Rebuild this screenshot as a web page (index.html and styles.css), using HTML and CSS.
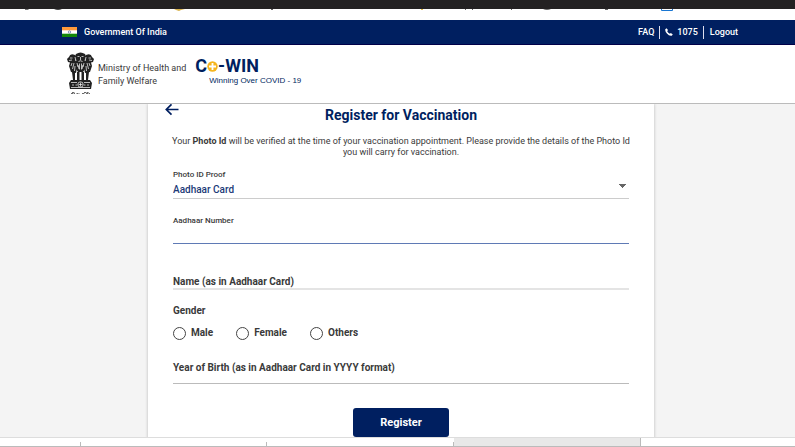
FILE: index.html
```
<!DOCTYPE html>
<html lang="en">
<head>
    <meta charset="UTF-8">
    <meta name="viewport" content="width=device-width, initial-scale=1.0">
    <title>Register for Vaccination</title>
    <link rel="stylesheet" href="styles.css">
</head>
<body>
    <div class="browser-top"></div>
    <div class="browser-strip">
        <svg width="795" height="11" viewBox="0 0 795 11" aria-hidden="true">
            <path d="M25 0h4l-1 1h-3z" fill="#777"/>
            <path d="M54 0h8q-4 2-8 0z" fill="#444"/>
            <path d="M174 0h11l-4 1-2 1-3-1z" fill="#d8b24a"/>
            <path d="M271 0h2v1h-2zM465 0h1v1h-1zM472 0h1v1h-1zM511 0h1v1h-1z" fill="#666"/>
            <path d="M421 0h2v1h-2z" fill="#e3c04a"/>
            <path d="M543 0h8q-4 2-8 0zM605 0h3v1h-3z" fill="#666"/>
            <path d="M661.500 0v1.500h11V0" fill="none" stroke="#1976d2"/>
        </svg>
    </div>
    <div class="gov-bar">
        <div class="gov-name">
            <svg width="15" height="10" viewBox="0 0 15 10" aria-hidden="true">
                <path d="M0 0h15v10H0z" fill="#fff"/>
                <path d="M0 0h15v3.300H0z" fill="#ff9a3c"/>
                <path d="M0 6.700h15V10H0z" fill="#138808"/>
                <circle cx="7.500" cy="5" r="1.200" fill="none" stroke="#5a6aa0" stroke-width=".7"/>
            </svg>
            <span>Government Of India</span>
        </div>
        <nav class="gov-links">
            <a href="#">FAQ</a>
            <a href="tel:1075">
                <svg width="8" height="8" viewBox="0 0 8 8" aria-hidden="true">
                    <path d="M.3 1.200 1.500.2 3 2.100 2.200 3.200Q3.100 4.800 4.800 5.700L5.900 5l1.900 1.500-1.100 1.200Q4.200 8.200 1.900 5.600-.1 3.300.3 1.200z" fill="#fff"/>
                </svg>
                1075
            </a>
            <a href="#">Logout</a>
        </nav>
    </div>
    <header class="header">
        <svg class="emblem" width="27" height="43" viewBox="0 0 27 43" aria-hidden="true">
            <g fill="#222">
                <path d="M9 2Q13.500-1 18 2l1.500 3-1 3 1.500 4-2 5-2 3h-5l-2-3-2-5 1.500-4-1-3z"/>
                <path d="M8 3Q3 1 2 5L0 7l1 3 2 .5L2 14l2 6 5 1 1-5-2-5z"/>
                <path d="M19 3q5-2 6 2l2 2-1 3-2 .5 1 3.500-2 6-5 1-1-5 2-5z"/>
                <path d="M5 20h3v8H6zM10 20h2.500v8H10zM14.500 20H17v8h-2.500zM19 20h3l-1 8h-2z"/>
                <path d="M4 28h19l2 3-1 6H3l-1-6z"/>
            </g>
            <g fill="none" stroke="#fff" stroke-width=".7">
                <path d="M10.500 4.500h2M14.500 4.500h2M13.500 5v3M11.500 9.500q2-1.500 4 0M10 11l1 4M17 11l-1 4M12.500 11.500v6M14.500 11.500v6M11 13l1 4M16 13l-1 4"/>
                <path d="M3 6h2.500M2 8.500l3-.5M5 11l-1 3M7 11l-1.500 6M8 14l-.5 5M24 6h-2.500M25 8.500 22 8M22 11l1 3M20 11l1.500 6M19 14l.5 5M8 5l1 4M19 5l-1 4"/>
                <path d="M4 30.500h6M17 30.500h6M4 35.500h19M5 33h2M8.500 33h1.500M17 33h1.500M20 33h2"/>
                <circle cx="13.500" cy="32.500" r="2.700" fill="#222"/>
                <path d="M13.500 30.500v4M11.500 32.500h4"/>
            </g>
            <path d="M4 41.500h4M9.500 41.500h3M15 41.500h3M19 41.500h4M5 40.500h3M17 40.500h5" stroke="#444" stroke-width=".8" stroke-dasharray="2 .6" fill="none"/>
        </svg>
        <p class="ministry">Ministry of Health and<br>Family Welfare</p>
        <a class="cowin" href="#">
            <span class="cowin-name">
                C<svg width="11" height="11" viewBox="0 0 11 11" aria-hidden="true">
                    <circle cx="5.500" cy="5.500" r="5.200" fill="#f6b51e"/>
                    <path d="M5.500 2v7M2 5.500h7" stroke="#fff" stroke-width="1.800"/>
                </svg>-WIN
            </span>
            <span class="cowin-tagline">Winning Over COVID - 19</span>
        </a>
    </header>
    <main class="page">
        <form class="card">
            <div class="card-title">
                <button class="back" type="button" aria-label="Back">
                    <svg width="14" height="12" viewBox="0 0 14 12" aria-hidden="true">
                        <path d="M6.500.3 1.300 5.500l5.200 5.200M1.300 5.500H13.500" fill="none" stroke="#001f60" stroke-width="1.700"/>
                    </svg>
                </button>
                <h1>Register for Vaccination</h1>
            </div>
            <p class="note">Your <b>Photo Id</b> will be verified at the time of your vaccination appointment. Please provide the details of the Photo Id you will carry for vaccination.</p>

            <div class="field">
                <label for="proof">Photo ID Proof</label>
                <select id="proof">
                    <option>Aadhaar Card</option>
                </select>
            </div>
            <div class="field active">
                <label for="number">Aadhaar Number</label>
                <input type="text" id="number">
            </div>
            <div class="field-inline name">
                <label for="name">Name (as in Aadhaar Card)</label>
                <input type="text" id="name">
            </div>
            <fieldset class="gender">
                <legend>Gender</legend>
                <div class="options">
                    <label><input type="radio" name="gender">Male</label>
                    <label><input type="radio" name="gender">Female</label>
                    <label><input type="radio" name="gender">Others</label>
                </div>
            </fieldset>
            <div class="field-inline birth">
                <label for="birth">Year of Birth (as in Aadhaar Card in YYYY format)</label>
                <input type="text" id="birth">
            </div>
            <button class="register" type="submit">Register</button>
        </form>
    </main>
    <div class="browser-bottom">
        <span></span>
        <span></span>
        <span></span>
        <span class="current"></span>
    </div>
</body>
</html>
```
FILE: styles.css
```
* {
    box-sizing: border-box;
}
body {
    margin: 0;
    height: 100vh;
    display: flex;
    flex-direction: column;
    overflow: hidden;
    font-family: Roboto, Arial, sans-serif;
    background-color: #fff;
    color: #3a3a3a;
}
a {
    color: inherit;
    text-decoration: none;
}
.browser-top {
    height: 9px;
    flex: none;
    background-color: #232122;
}
.browser-strip {
    height: 11px;
    flex: none;
    overflow: hidden;
}
.browser-strip svg {
    display: block;
}
.gov-bar {
    display: flex;
    justify-content: space-between;
    align-items: center;
    flex: none;
    height: 25px;
    padding: 0 57px 0 62px;
    background-color: #001f60;
    border-bottom: 1px solid #000048;
    color: #fff;
    font-size: 9px;
    font-weight: 500;
}
.gov-name {
    display: flex;
    align-items: center;
    gap: 7px;
}
.gov-links {
    display: flex;
}
.gov-links a {
    display: flex;
    align-items: center;
    gap: 4px;
    line-height: 13px;
    padding: 0 5px;
}
.gov-links a:last-child {
    padding: 0 0 0 6px;
}
.gov-links a + a {
    border-left: 1px solid #dde;
}
.header {
    display: flex;
    flex: none;
    height: 59px;
    padding: 7px 67px 0;
    border-bottom: 1px solid #bbb;
}
.ministry {
    margin: 10px 9px 0 4px;
    font-size: 9px;
    line-height: 13px;
}
.cowin {
    display: flex;
    flex-direction: column;
    margin-top: 5px;
    color: #001f60;
}
.cowin-name {
    display: flex;
    align-items: center;
    font-size: 18px;
    line-height: 18px;
    font-weight: 700;
}
.cowin-tagline {
    margin-left: 14px;
    font-family: "Liberation Sans", Arial, sans-serif;
    font-size: 8px;
    line-height: 11px;
}
.page {
    flex: 1;
    min-height: 0;
    overflow: hidden;
    padding: 0 141px 0 148px;
    background-color: #f4f4f4;
}
.card {
    display: flex;
    flex-direction: column;
    padding: 0 25px 10px;
    background-color: #fff;
    box-shadow: 0 0 3px rgba(0, 0, 0, 0.25);
}
.card-title {
    display: grid;
    grid-template-columns: 14px 1fr 14px;
    margin: 0 -8px;
}
.card-title h1 {
    margin: 2px 0 0;
    font-size: 14px;
    line-height: 18px;
    font-weight: 700;
    text-align: center;
    color: #001f60;
}
.back {
    align-self: start;
    padding: 0;
    border: none;
    background: none;
    cursor: pointer;
}
.back svg {
    display: block;
}
.note {
    margin: 12px -4px 0;
    font-size: 9px;
    line-height: 11px;
    text-align: center;
}
.field {
    display: flex;
    flex-direction: column;
    margin-top: 10px;
}
.field label {
    font-size: 8px;
    line-height: 13px;
    font-weight: 500;
}
.field input,
.field select {
    height: 18px;
    padding: 0;
    border: none;
    border-bottom: 1px solid #ccc;
    border-radius: 0;
    background: none;
    font: 500 10px Roboto, Arial, sans-serif;
    color: #1c3a78;
    outline: none;
}
.field select {
    appearance: none;
    background: conic-gradient(from -45deg at 50% 100%, #666 90deg, transparent 0) no-repeat right 3px top 3px / 7px 4px;
    background-image: conic-gradient(from 315deg at 50% 100%, #666 90deg, transparent 0);
}
.field.active {
    margin-top: 15px;
}
.field.active input {
    height: 17px;
    border-color: #5f7ab5;
}
/* label sits in the same cell as the empty input */
.field-inline {
    display: grid;
}
.field-inline label,
.field-inline input {
    grid-area: 1 / 1;
    font-size: 10px;
}
.field-inline label {
    line-height: 17px;
    font-weight: 700;
    pointer-events: none;
}
.field-inline input {
    padding: 0;
    border: none;
    border-bottom: 1px solid #bbb;
    background: none;
    outline: none;
}
.name {
    margin-top: 29px;
}
.name input {
    height: 17px;
    border-bottom: 2px solid #e4e4e4;
}
.gender {
    margin: 13px 0 0;
    padding: 0;
    border: none;
    font-size: 10px;
    font-weight: 700;
}
.gender legend {
    padding: 0;
    line-height: 16px;
}
.options {
    display: flex;
    gap: 23px;
    margin-top: 6px;
}
.options label {
    display: flex;
    align-items: center;
    gap: 5px;
    line-height: 16px;
}
.options input {
    appearance: none;
    width: 13px;
    height: 13px;
    margin: 0;
    border: 1px solid #444;
    border-radius: 50%;
}
.options input:checked {
    background-color: #001f60;
}
.birth {
    margin-top: 18px;
}
.birth input {
    height: 25px;
}
.register {
    align-self: center;
    width: 96px;
    height: 29px;
    margin-top: 24px;
    border: none;
    border-radius: 3px;
    background-color: #001f60;
    color: #fff;
    font: 700 11px Roboto, Arial, sans-serif;
    cursor: pointer;
}
.browser-bottom {
    display: grid;
    grid-template-columns: 81fr 186fr 187fr 187fr 154fr;
    flex: none;
    height: 10px;
    border-top: 1px solid #ddd;
    border-bottom: 1px solid #bbb;
}
.browser-bottom span {
    margin-top: 4px;
    border-right: 1px solid #bbb;
}
.browser-bottom .current {
    margin-top: 0;
    background-color: #e8e8e8;
}
```
